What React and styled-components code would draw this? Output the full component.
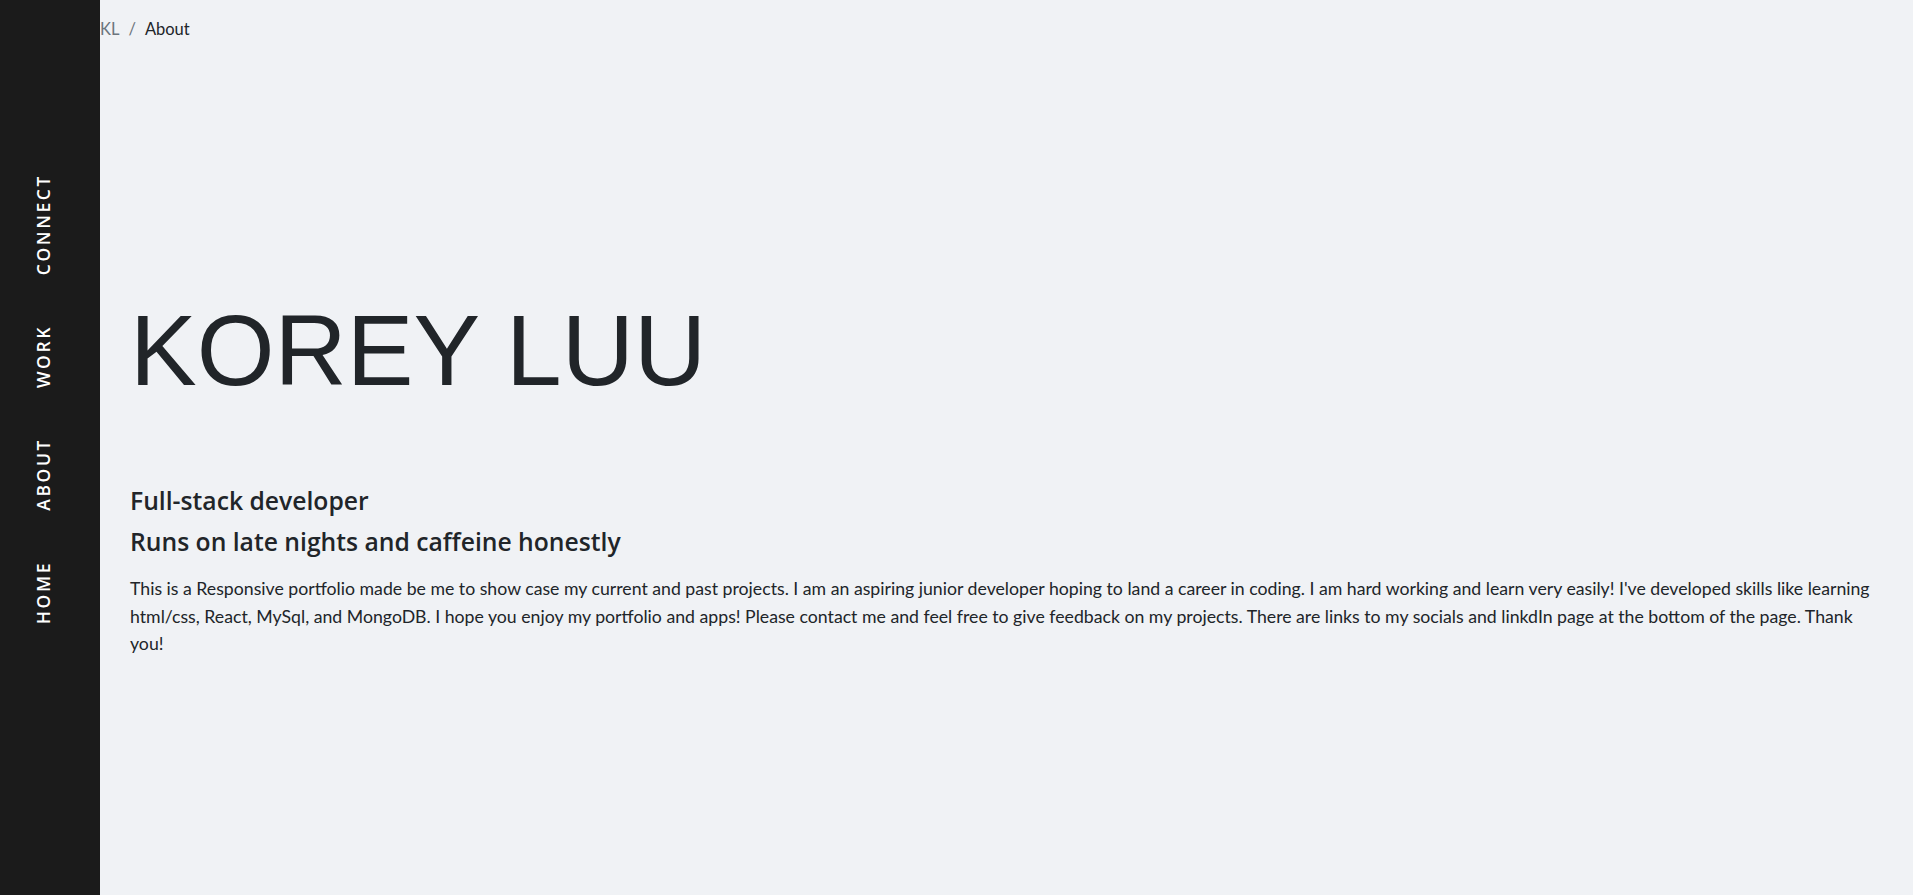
import React from "react";
import styled, { createGlobalStyle } from "styled-components";

const Global = createGlobalStyle`
  html, body { margin: 0; padding: 0; }
  body {
    background: #f0f2f5;
    color: #212529;
    font-family: "Lato", "Open Sans", sans-serif;
  }
  * { box-sizing: border-box; }
`;

const Layout = styled.div`
  display: flex;
  min-height: 895px;
`;

const Sidebar = styled.nav`
  flex: 0 0 100px;
  width: 100px;
  background: #1b1b1b;
  display: flex;
  flex-direction: column;
  align-items: flex-start;
  padding: 174px 0 0 34px;
  gap: 50px;
`;

const NavLink = styled.a`
  writing-mode: vertical-rl;
  transform: rotate(180deg);
  color: #ffffff;
  font-family: "Open Sans", sans-serif;
  font-weight: 600;
  font-size: 17.5px;
  letter-spacing: 2.6px;
  line-height: 18px;
  text-decoration: none;
  text-transform: uppercase;
`;

const Main = styled.main`
  flex: 1;
  min-width: 0;
  display: flex;
  flex-direction: column;
`;

const Breadcrumb = styled.ol`
  list-style: none;
  display: flex;
  margin: 0;
  padding: 17px 0 0 0;
  font-family: "Lato", sans-serif;
  font-size: 16.5px;
  line-height: 24px;
`;

const Crumb = styled.li`
  color: ${(p) => (p.$active ? "#212529" : "#6c757d")};
  &:not(:first-child)::before {
    content: "/";
    color: #6c757d;
    padding: 0 9px;
  }
`;

const Content = styled.section`
  padding: 0 32px 0 30px;
`;

const Title = styled.h1`
  font-family: "Liberation Sans", Arial, sans-serif;
  font-weight: 400;
  font-size: 100px;
  line-height: 120px;
  margin: 249px 0 76px 0;
`;

const Sub = styled.h3`
  font-family: "Open Sans", sans-serif;
  font-size: 24.7px;
  font-weight: 600;
  line-height: 29px;
  margin: 0 0 12px 0;
`;

const Body = styled.p`
  font-family: "Lato", sans-serif;
  font-size: 17.7px;
  line-height: 27.5px;
  margin: 19px 0 0 0;
`;

export default function App() {
  return (
    <>
      <Global />
      <Layout>
        <Sidebar>
          <NavLink href="#connect">Connect</NavLink>
          <NavLink href="#work">Work</NavLink>
          <NavLink href="#about">About</NavLink>
          <NavLink href="#home">Home</NavLink>
        </Sidebar>
        <Main>
          <Breadcrumb>
            <Crumb>KL</Crumb>
            <Crumb $active>About</Crumb>
          </Breadcrumb>
          <Content>
            <Title>KOREY LUU</Title>
            <Sub>Full-stack developer</Sub>
            <Sub>Runs on late nights and caffeine honestly</Sub>
            <Body>
              This is a Responsive portfolio made be me to show case my current and past projects. I am an aspiring
              junior developer hoping to land a career in coding. I am hard working and learn very easily! I've
              developed skills like learning html/css, React, MySql, and MongoDB. I hope you enjoy my portfolio and
              apps! Please contact me and feel free to give feedback on my projects. There are links to my socials and
              linkdIn page at the bottom of the page. Thank you!
            </Body>
          </Content>
        </Main>
      </Layout>
    </>
  );
}
